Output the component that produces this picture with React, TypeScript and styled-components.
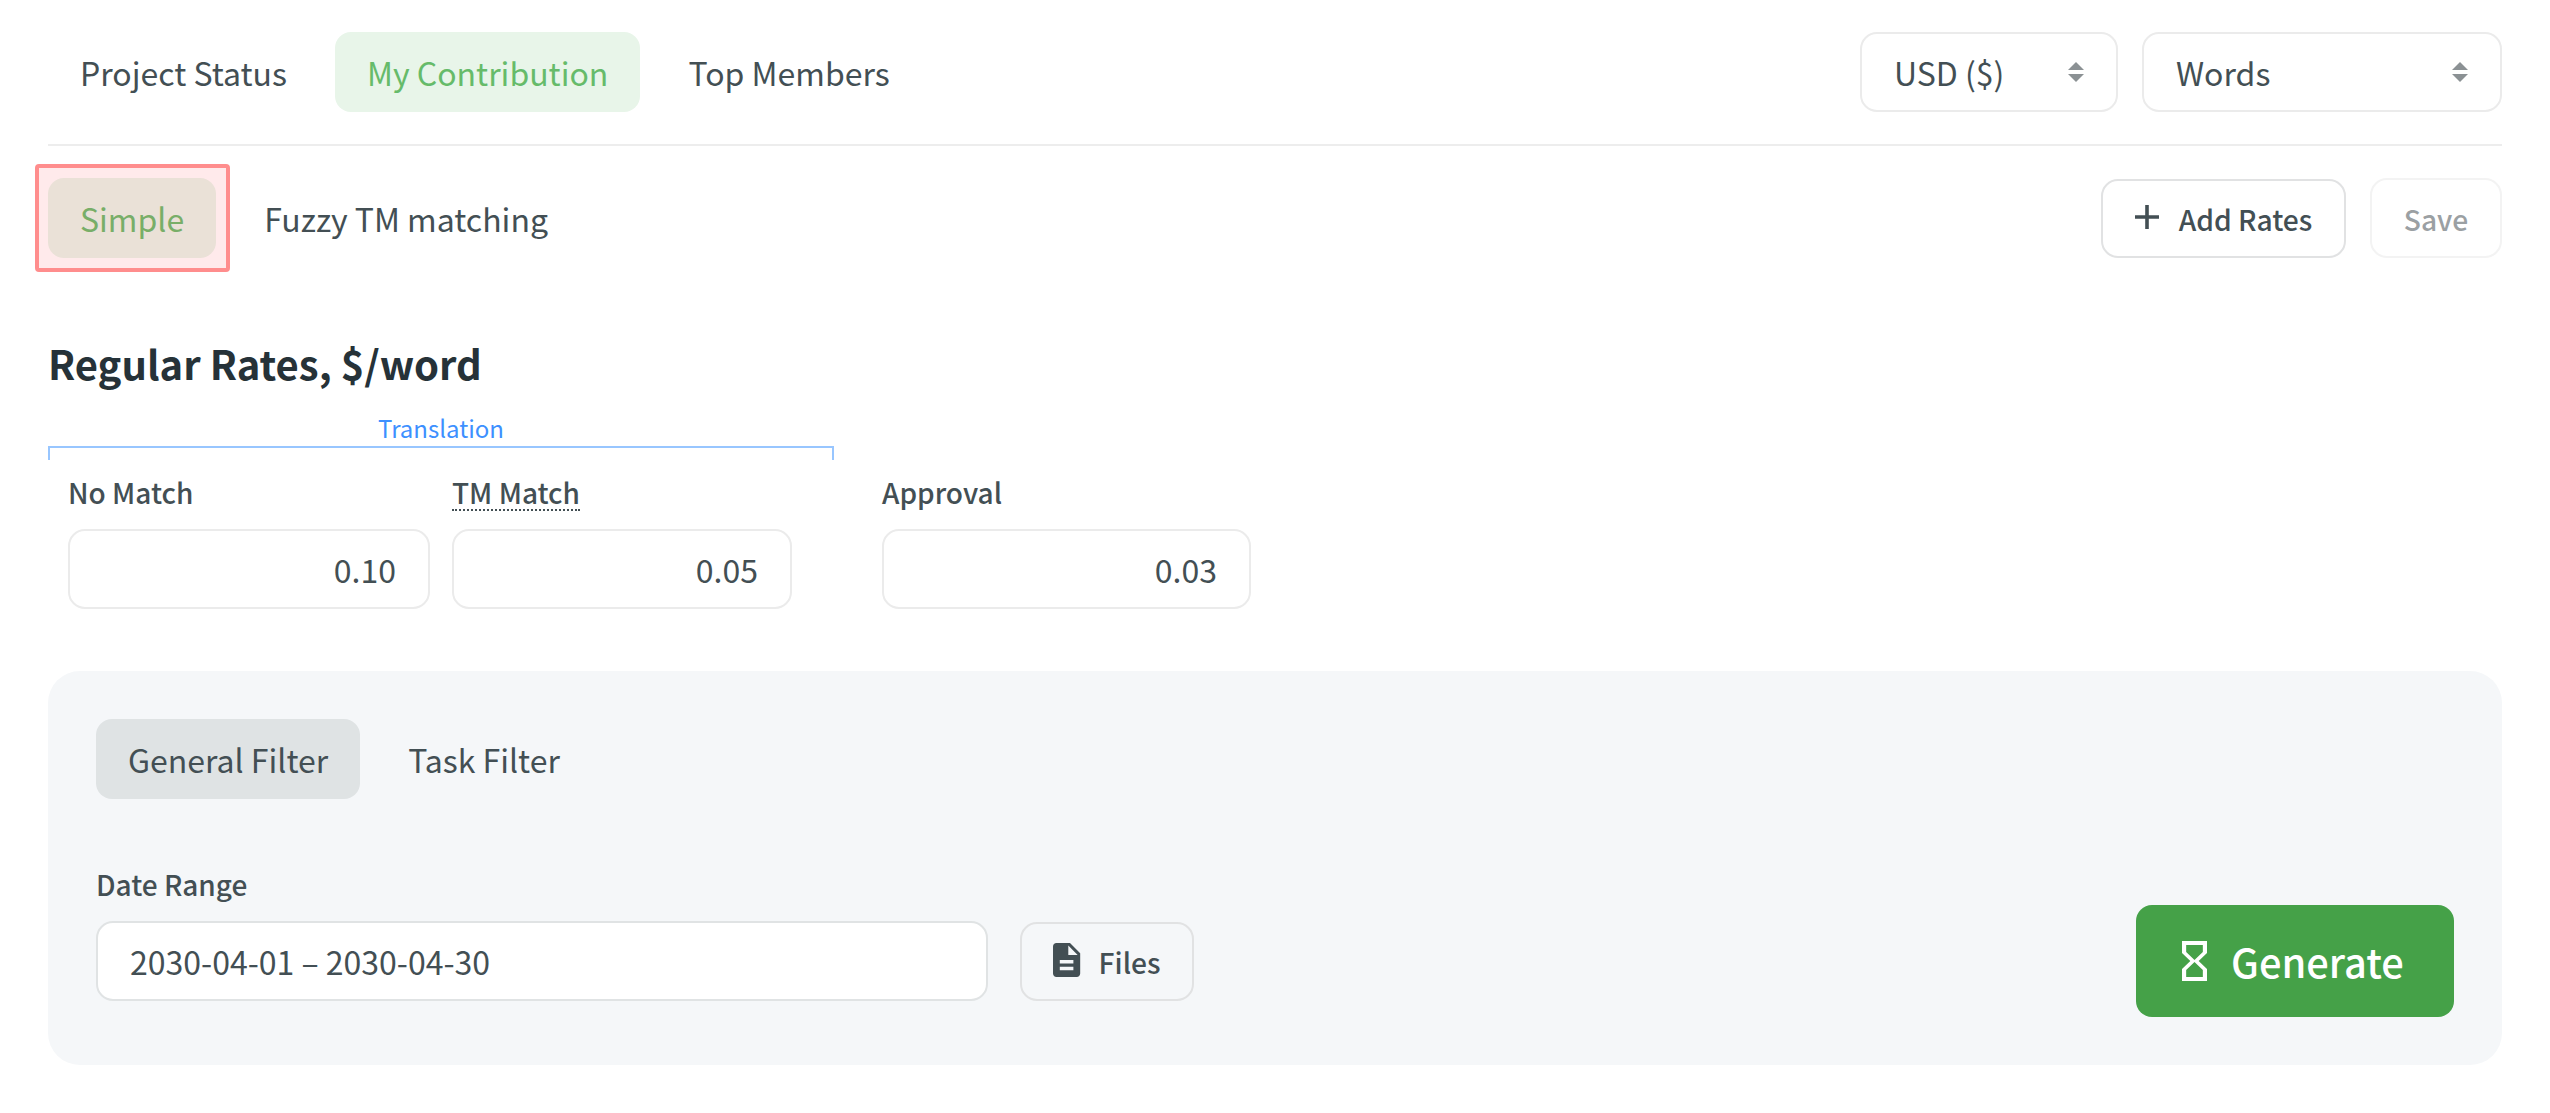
import React from "react";
import styled, { createGlobalStyle, css } from "styled-components";

const ink = "#434f54";
const line = "#ebebeb";

const GlobalStyle = createGlobalStyle`
  *, *::before, *::after { box-sizing: border-box; }
  body {
    margin: 0;
    background: #fff;
    color: ${ink};
    font-family: "Noto Sans CJK SC", "Noto Sans", sans-serif;
    font-size: 32px;
  }
  button, input { font: inherit; color: inherit; margin: 0; }
`;

const Page = styled.main`
  display: flex;
  flex-direction: column;
  min-height: 1113px;
  padding: 32px 48px 48px;
`;

const Bar = styled.div<{ $divided?: boolean }>`
  display: flex;
  justify-content: space-between;
  ${({ $divided }) =>
    $divided &&
    css`
      padding-bottom: 32px;
      border-bottom: 2px solid #ededed;
      margin-bottom: 32px;
    `}
`;

const Group = styled.div<{ $gap?: number }>`
  display: flex;
  align-items: flex-end;
  gap: ${({ $gap = 16 }) => $gap}px;
`;

const Tab = styled.button<{ $tone?: "green" | "gray" }>`
  height: 80px;
  padding: 0 32px;
  border: 0;
  border-radius: 16px;
  line-height: 80px;
  white-space: nowrap;
  background: ${({ $tone }) =>
    $tone === "green" ? "#e8f5e9" : $tone === "gray" ? "#dfe3e4" : "transparent"};
  color: ${({ $tone }) => ($tone === "green" ? "#66bb6a" : ink)};
`;

const Highlighted = styled.div`
  position: relative;
  display: flex;

  &::after {
    content: "";
    position: absolute;
    inset: -14px -14px -14px -13px;
    border: 4px solid #ff8d8d;
    border-radius: 4px;
    background: rgba(255, 80, 90, 0.12);
  }
`;

const Select = styled.div<{ $width: number }>`
  display: flex;
  align-items: center;
  justify-content: space-between;
  width: ${({ $width }) => $width}px;
  height: 80px;
  padding: 0 32px;
  border: 2px solid ${line};
  border-radius: 17px;
  line-height: 76px;
`;

const Button = styled.button<{ $muted?: boolean; $width: number }>`
  display: flex;
  align-items: center;
  justify-content: center;
  width: ${({ $width }) => $width}px;
  height: ${({ $muted }) => ($muted ? 80 : 79)}px;
  padding: 0;
  border: 2px solid ${({ $muted }) => ($muted ? "#f3f3f3" : "#e1e2e3")};
  border-radius: 17px;
  background: transparent;
  color: ${({ $muted }) => ($muted ? "#9ba0a3" : ink)};
  font-size: 28.2px;
  font-weight: 500;
  line-height: 75px;
  white-space: nowrap;
`;

const Title = styled.h1`
  margin: 77px 0 0;
  color: #263238;
  font-size: 40px;
  font-weight: 700;
  line-height: 56px;
`;

const Rates = styled.section`
  display: flex;
  align-items: flex-end;
  gap: 48px;
  margin-top: 21px;
`;

const Bracket = styled.div`
  width: 786px;
`;

const BracketLabel = styled.div`
  height: 34px;
  color: #3d90ff;
  font-size: 24px;
  line-height: 32px;
  text-align: center;
`;

const BracketLine = styled.div`
  height: 14px;
  border: 2px solid #98c6ff;
  border-bottom: 0;
`;

const Fields = styled.div`
  display: flex;
  gap: 22px;
  padding: 13px 0 0 20px;
`;

const Field = styled.div<{ $width: number }>`
  display: flex;
  flex-direction: column;
  align-items: flex-start;
  width: ${({ $width }) => $width}px;
`;

const Label = styled.label<{ $hint?: boolean }>`
  height: 38px;
  margin-bottom: 18px;
  border-bottom: 2px dotted ${({ $hint }) => ($hint ? ink : "transparent")};
  font-size: 28px;
  font-weight: 500;
  line-height: 38px;
  white-space: nowrap;
`;

const Input = styled.input<{ $numeric?: boolean }>`
  width: 100%;
  height: 80px;
  padding: 0 32px;
  border: 2px solid ${({ $numeric }) => ($numeric ? line : "#e0e3e4")};
  border-radius: 17px;
  outline: 0;
  background: #fff;
  text-align: ${({ $numeric }) => ($numeric ? "right" : "left")};
`;

const Panel = styled.section`
  display: flex;
  flex-direction: column;
  height: 394px;
  margin-top: 62px;
  padding: 48px;
  border-radius: 32px;
  background: #f5f7f9;
`;

const PanelRow = styled.div`
  display: flex;
  align-items: flex-end;
  margin-top: 66px;
`;

const FilesSlot = styled.div`
  margin-left: 32px;
`;

const Generate = styled.button`
  display: flex;
  align-items: center;
  gap: 24px;
  width: 318px;
  height: 112px;
  margin: 0 0 -16px auto;
  padding: 0 0 0 46px;
  border: 0;
  border-radius: 16px;
  background: #45a148;
  color: #fff;
  font-size: 39.8px;
  font-weight: 500;
  line-height: 112px;
`;

const Sorter = () => (
  <svg width="16" height="20" viewBox="0 0 16 20" fill="#8b9194">
    <path d="M8 0 16 8H0zM0 12h16L8 20z" />
  </svg>
);

const PlusGlyph = styled.svg`
  margin: -3px 20px 0 0;
`;

const FileGlyph = styled.svg`
  margin: -3px 18px 0 0;
`;

export default function App() {
  return (
    <>
      <GlobalStyle />
      <Page>
        <Bar $divided>
          <Group>
            <Tab>Project Status</Tab>
            <Tab $tone="green">My Contribution</Tab>
            <Tab>Top Members</Tab>
          </Group>
          <Group $gap={24}>
            <Select $width={258}>
              USD ($) <Sorter />
            </Select>
            <Select $width={360}>
              Words <Sorter />
            </Select>
          </Group>
        </Bar>

        <Bar>
          <Group>
            <Highlighted>
              <Tab $tone="green">Simple</Tab>
            </Highlighted>
            <Tab>Fuzzy TM matching</Tab>
          </Group>
          <Group $gap={24}>
            <Button $width={245}>
              <PlusGlyph width="24" height="24" viewBox="0 0 24 24" fill="none" stroke="currentColor" strokeWidth="3.6">
                <path d="M12 0v24M0 12h24" />
              </PlusGlyph>
              Add Rates
            </Button>
            <Button $width={132} $muted>
              Save
            </Button>
          </Group>
        </Bar>

        <Title>Regular Rates, $/word</Title>

        <Rates>
          <Bracket>
            <BracketLabel>Translation</BracketLabel>
            <BracketLine />
            <Fields>
              <Field $width={362}>
                <Label>No Match</Label>
                <Input $numeric defaultValue="0.10" />
              </Field>
              <Field $width={340}>
                <Label $hint>TM Match</Label>
                <Input $numeric defaultValue="0.05" />
              </Field>
            </Fields>
          </Bracket>
          <Field $width={369}>
            <Label>Approval</Label>
            <Input $numeric defaultValue="0.03" />
          </Field>
        </Rates>

        <Panel>
          <Group>
            <Tab $tone="gray">General Filter</Tab>
            <Tab>Task Filter</Tab>
          </Group>
          <PanelRow>
            <Field $width={892}>
              <Label>Date Range</Label>
              <Input defaultValue="2030-04-01 – 2030-04-30" />
            </Field>
            <FilesSlot>
              <Button $width={174}>
                <FileGlyph width="27.2" height="34" viewBox="4 2 16 20" fill="currentColor">
                  <path d="M14 2H6c-1.1 0-1.99.9-1.99 2L4 20c0 1.1.89 2 1.99 2H18c1.1 0 2-.9 2-2V8l-6-6zm2 16H8v-2h8v2zm0-4H8v-2h8v2zm-3-5V3.5L18.5 9H13z" />
                </FileGlyph>
                Files
              </Button>
            </FilesSlot>
            <Generate>
              <svg width="25" height="40" viewBox="6 2 12 20" preserveAspectRatio="none" fill="currentColor">
                <path d="M6 2v6l4 4-4 4v6h12v-6l-4-4 4-4V2H6zm10 14.5V20H8v-3.5l4-4 4 4zm-4-5l-4-4V4h8v3.5l-4 4z" />
              </svg>
              Generate
            </Generate>
          </PanelRow>
        </Panel>
      </Page>
    </>
  );
}
